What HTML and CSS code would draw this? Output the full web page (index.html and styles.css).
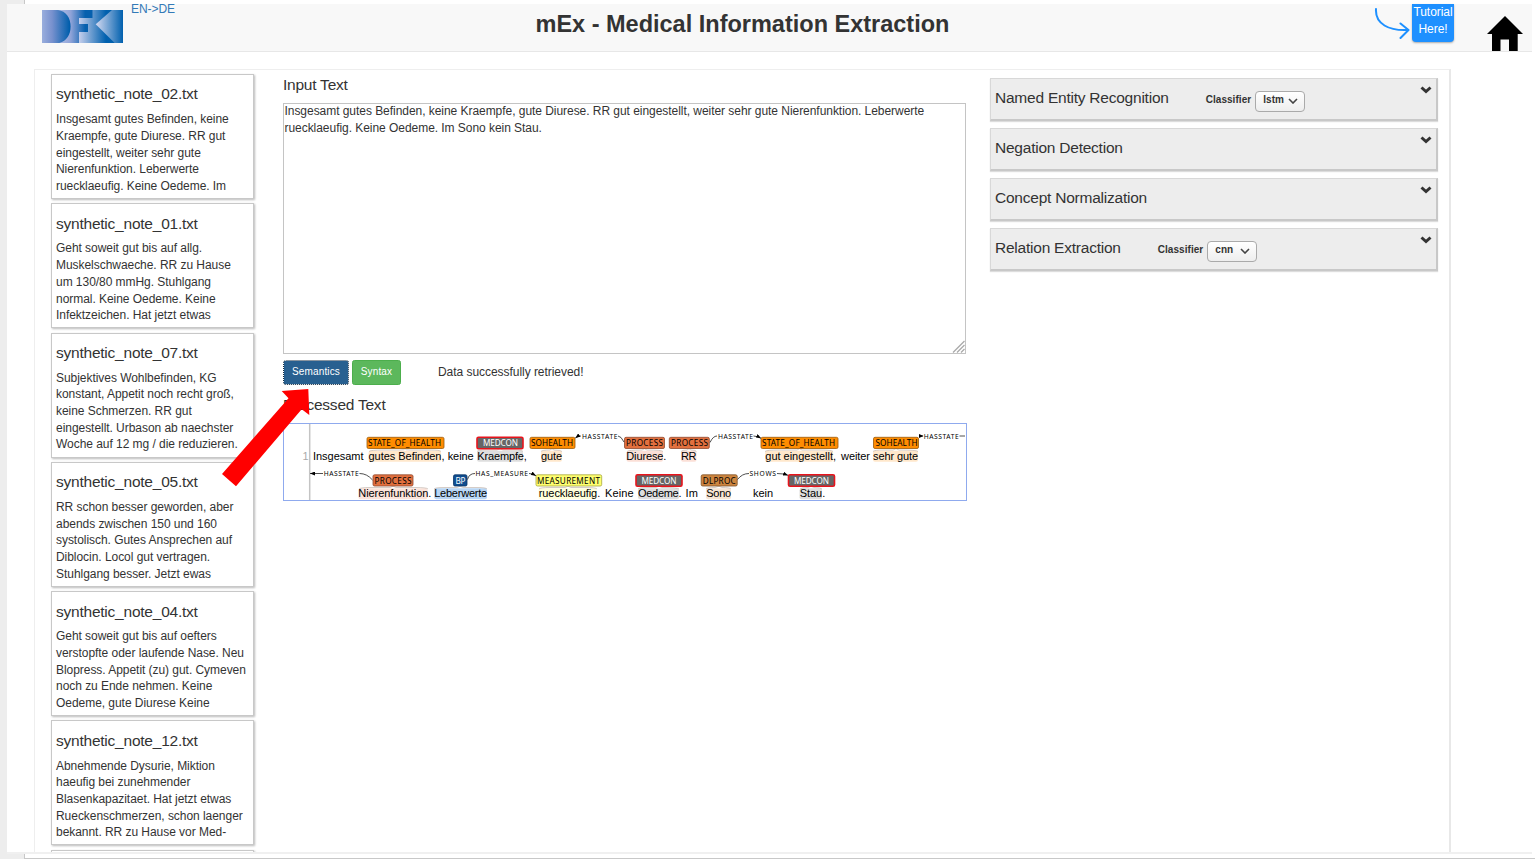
FILE: index.html
```html
<!DOCTYPE html>
<html lang="de">
<head>
<meta charset="utf-8">
<title>mEx - Medical Information Extraction</title>
<link rel="stylesheet" href="styles.css">
</head>
<body>
<div class="page">
  <header class="navbar">
    <svg class="logo" viewBox="0 0 81 33.3" preserveAspectRatio="none">
      <defs>
        <linearGradient id="d" gradientUnits="userSpaceOnUse" x1="0" x2="29"><stop offset="0" stop-color="#9aaedd"/><stop offset="0.35" stop-color="#7891ce"/><stop offset="0.95" stop-color="#005eac"/></linearGradient>
        <linearGradient id="f" gradientUnits="userSpaceOnUse" x1="16" x2="48"><stop offset="0" stop-color="#b4c0e5"/><stop offset="0.4" stop-color="#8fa3d8"/><stop offset="0.85" stop-color="#0560ae"/></linearGradient>
        <linearGradient id="k" gradientUnits="userSpaceOnUse" x1="37" x2="64"><stop offset="0" stop-color="#c5cfec"/><stop offset="1" stop-color="#0060ae"/></linearGradient>
        <linearGradient id="c" gradientUnits="userSpaceOnUse" x1="54" x2="81"><stop offset="0" stop-color="#d3d9f1"/><stop offset="1" stop-color="#0060ae"/></linearGradient>
      </defs>
      <rect width="81" height="33.3" fill="url(#k)"/>
      <path d="M0 0H50.500V8H46V14H46V22H37V33.300H0Z" fill="url(#f)"/>
      <path d="M37 8H50.500V14H37Z" fill="url(#k)"/>
      <path d="M0 0H16C24 1 28.600 8 28.600 16.500S24 32 16 33.300H0Z" fill="url(#d)"/>
      <path d="M53.700 14.300L70 0H81V33.300H73Z" fill="url(#c)"/>
    </svg>
    <a class="lang">EN-&gt;DE</a>
    <h1>mEx - Medical Information Extraction</h1>
    <svg class="swoosh" viewBox="0 0 36 34" fill="none" stroke="#1e90ff" stroke-width="2" stroke-linecap="round" stroke-linejoin="round"><path d="M2 1C1 16 15 23 34 22M26.500 15.500L34.500 22L26.500 30"/></svg>
    <a class="tutorial">Tutorial<br>Here!</a>
    <svg class="home" viewBox="0 0 36 35"><path d="M18 0L36 18H30.700V35H22V23.500H13.500V35H5V18H0Z"/></svg>
  </header>
  <main class="workspace">
    <aside class="notes">
      <article class="note"><h4>synthetic_note_02.txt</h4><p>Insgesamt gutes Befinden, keine
Kraempfe, gute Diurese. RR gut
eingestellt, weiter sehr gute
Nierenfunktion. Leberwerte
ruecklaeufig. Keine Oedeme. Im</p></article>
      <article class="note"><h4>synthetic_note_01.txt</h4><p>Geht soweit gut bis auf allg.
Muskelschwaeche. RR zu Hause
um 130/80 mmHg. Stuhlgang
normal. Keine Oedeme. Keine
Infektzeichen. Hat jetzt etwas</p></article>
      <article class="note"><h4>synthetic_note_07.txt</h4><p>Subjektives Wohlbefinden, KG
konstant, Appetit noch recht groß,
keine Schmerzen. RR gut
eingestellt. Urbason ab naechster
Woche auf 12 mg / die reduzieren.</p></article>
      <article class="note"><h4>synthetic_note_05.txt</h4><p>RR schon besser geworden, aber
abends zwischen 150 und 160
systolisch. Gutes Ansprechen auf
Diblocin. Locol gut vertragen.
Stuhlgang besser. Jetzt ewas</p></article>
      <article class="note"><h4>synthetic_note_04.txt</h4><p>Geht soweit gut bis auf oefters
verstopfte oder laufende Nase. Neu
Blopress. Appetit (zu) gut. Cymeven
noch zu Ende nehmen. Keine
Oedeme, gute Diurese Keine</p></article>
      <article class="note"><h4>synthetic_note_12.txt</h4><p>Abnehmende Dysurie, Miktion
haeufig bei zunehmender
Blasenkapazitaet. Hat jetzt etwas
Rueckenschmerzen, schon laenger
bekannt. RR zu Hause vor Med-</p></article>
      <article class="note"></article>
    </aside>
    <section class="editor">
      <h4>Input Text</h4>
      <div class="input"><p>Insgesamt gutes Befinden, keine Kraempfe, gute Diurese. RR gut eingestellt, weiter sehr gute Nierenfunktion. Leberwerte ruecklaeufig. Keine Oedeme. Im Sono kein Stau.</p>
        <svg class="grip" viewBox="0 0 13 13" stroke="#aaa" stroke-width="1.300"><path d="M1 12.500L12.500 1M5 12.500L12.500 5M9 12.500L12.500 9"/></svg>
      </div>
      <div class="actions"><button class="btn semantics">Semantics</button><button class="btn syntax">Syntax</button><span class="status">Data successfully retrieved!</span></div>
      <h4 class="processed">Processed Text</h4>
      <svg class="brat" viewBox="283 423 684 78">
        <defs><marker id="arrow" viewBox="0 0 5 4" refX="5" refY="2" markerWidth="5" markerHeight="4" markerUnits="userSpaceOnUse" orient="auto"><path d="M0 0L5 2L0 4Z" class="head"/></marker></defs>
        <rect x="283.5" y="423.5" width="683" height="77" fill="#fff" stroke="#8faaee"/>
        <path d="M309.700 424V500" stroke="#c4c4c4" stroke-width="1.500"/>
        <g class="marks">
          <rect x="368.500" y="450.700" width="72.500" height="11" fill="#ffe8cc"/><rect x="477" y="450.700" width="46" height="11" fill="#dedede"/><rect x="541" y="450.700" width="21" height="11" fill="#ffe8cc"/><rect x="626.500" y="450.700" width="36.500" height="11" fill="#fbe0d7"/><rect x="681" y="450.700" width="15.500" height="11" fill="#fbe0d7"/><rect x="765" y="450.700" width="68" height="11" fill="#ffe8cc"/><rect x="873" y="450.700" width="45" height="11" fill="#ffe8cc"/>
          <rect x="358.500" y="488.200" width="69" height="11" fill="#fbe3da"/><rect x="434.300" y="488.200" width="52.700" height="11" fill="#b8d6f5"/><rect x="538.500" y="488.200" width="58" height="11" fill="#ffffda"/><rect x="638" y="488.200" width="41" height="11" fill="#dedede"/><rect x="706" y="488.200" width="25" height="11" fill="#f7e5d4"/><rect x="799.500" y="488.200" width="22.500" height="11" fill="#dedede"/>
        </g>
        <g class="brackets">
          <path d="M369 451.500Q370 450 384 450H400Q405 450 405 448.700Q405 450 410 450H430Q440 450 441 451.500M477 451.500Q478 450 486 450H497L500 448.700L503 450H514Q522 450 523 451.500M541 451.500Q542 450 550 450L552 448.700L554 450Q561 450 562 451.500M627 451.500Q628 450 642 450L644.500 448.700L647 450Q662 450 663 451.500M681 451.500Q682 450 687 450L689 448.700L691 450Q696 450 696.500 451.500M765 451.500Q766 450 780 450H797L799.500 448.700L802 450H820Q832 450 833 451.500M873 451.500Q874 450 884 450H893L896 448.700L899 450Q917 450 918 451.500"/>
          <path d="M359 489Q360 487.500 370 487.500H390L393 486.200L396 487.500H415Q427 487.500 428 489M434 489Q435 487.500 444 487.500H457L460 486.200L463 487.500H477Q486 487.500 487 489M539 489Q540 487.500 550 487.500H565L568 486.200L571 487.500H585Q596 487.500 597 489M638 489Q639 487.500 648 487.500H656L659 486.200L662 487.500Q678 487.500 679 489M706 489Q707 487.500 715 487.500L719 486.200L722 487.500Q730 487.500 731 489M800 489Q801 487.500 808 487.500L811 486.200L814 487.500Q821 487.500 822 489"/>
        </g>
        <g class="words">
          <text x="302.500" y="459.700" fill="#aaa">1</text>
          <text x="313" y="459.700" textLength="50.500">Insgesamt</text><text x="368.500" y="459.700" textLength="76">gutes Befinden,</text><text x="447.700" y="459.700" textLength="26">keine</text><text x="477.300" y="459.700" textLength="49.500">Kraempfe,</text><text x="541" y="459.700" textLength="21">gute</text><text x="626.300" y="459.700" textLength="40">Diurese.</text><text x="681" y="459.700" textLength="15.500">RR</text><text x="765.300" y="459.700" textLength="70.700">gut eingestellt,</text><text x="841" y="459.700" textLength="29">weiter</text><text x="873" y="459.700" textLength="45">sehr gute</text>
          <text x="358.300" y="497" textLength="73">Nierenfunktion.</text><text x="434.200" y="497" textLength="53">Leberwerte</text><text x="538.700" y="497" textLength="61.500">ruecklaeufig.</text><text x="605" y="497" textLength="28.500">Keine</text><text x="638" y="497" textLength="43.500">Oedeme.</text><text x="685.500" y="497" textLength="12.500">Im</text><text x="706.200" y="497" textLength="25">Sono</text><text x="753" y="497" textLength="20">kein</text><text x="799.700" y="497" textLength="25.500">Stau.</text>
        </g>
        <g class="tags">
          <rect x="367" y="437.300" width="77" height="11.200" fill="#ff8c00" stroke="#9a5a0a"/><rect x="530" y="437.300" width="45" height="11.200" fill="#ff8c00" stroke="#9a5a0a"/><rect x="761" y="437.300" width="77" height="11.200" fill="#ff8c00" stroke="#9a5a0a"/><rect x="873.500" y="437.300" width="45" height="11.200" fill="#ff8c00" stroke="#9a5a0a"/>
          <rect x="624.500" y="437.300" width="40" height="11.200" fill="#e2703f" stroke="#8f4a30"/><rect x="669.300" y="437.300" width="40" height="11.200" fill="#e2703f" stroke="#8f4a30"/><rect x="373" y="474.800" width="40" height="11.200" fill="#e2703f" stroke="#8f4a30"/>
          <rect x="453.500" y="474.800" width="13.500" height="11.200" fill="#0f4d8f" stroke="#0a3564"/><rect x="536" y="474.800" width="65.700" height="11.200" fill="#ffff70" stroke="#a6a63f"/><rect x="701.200" y="474.800" width="36" height="11.200" fill="#cd853f" stroke="#7d5127"/>
          <g class="alert"><rect x="477" y="437.200" width="46" height="11.500"/><rect x="636" y="474.700" width="46" height="11.500"/><rect x="788.500" y="474.700" width="46" height="11.500"/></g>
        </g>
        <g class="labels">
          <text x="368" y="446.200" textLength="73">STATE_OF_HEALTH</text><text x="483" y="446.200" textLength="35" fill="#fff">MEDCON</text><text x="531" y="446.200" textLength="42">SOHEALTH</text><text x="626" y="446.200" textLength="37">PROCESS</text><text x="671" y="446.200" textLength="37">PROCESS</text><text x="762" y="446.200" textLength="73">STATE_OF_HEALTH</text><text x="875.500" y="446.200" textLength="42">SOHEALTH</text>
          <text x="374.500" y="483.700" textLength="37">PROCESS</text><text x="455.500" y="483.700" textLength="10" fill="#fff">BP</text><text x="537" y="483.700" textLength="63">MEASUREMENT</text><text x="641.500" y="483.700" textLength="35" fill="#fff">MEDCON</text><text x="702.700" y="483.700" textLength="33">DLPROC</text><text x="794" y="483.700" textLength="35" fill="#fff">MEDCON</text>
        </g>
        <g class="arcs">
          <path d="M581 436Q578 436 575.300 438" marker-end="url(#arrow)"/><path d="M618 436Q621 436 624 442"/>
          <path d="M710 442.500Q713 436 717 436"/><path d="M753.500 436Q757 436 761 438.300" marker-end="url(#arrow)"/>
          <path d="M923 436H919M959.500 436H965"/><path d="M919 434L923.500 436L919 438Z" class="head"/>
          <path d="M323 473.500H310" marker-end="url(#arrow)"/><path d="M359.500 473.500Q367 473.500 372.500 480"/>
          <path d="M467.500 479.500Q469 473.500 475 473.500"/><path d="M529 473.500Q532 473.500 536 475.700" marker-end="url(#arrow)"/>
          <path d="M737.500 479.500Q742 473.500 749 473.500"/><path d="M777 473.500Q783 473.500 788 475.300" marker-end="url(#arrow)"/>
        </g>
        <g class="relations">
          <text x="582" y="438.600" textLength="35.500">HASSTATE</text><text x="718" y="438.600" textLength="35">HASSTATE</text><text x="923.700" y="438.600" textLength="35">HASSTATE</text><text x="323.700" y="476.100" textLength="35">HASSTATE</text><text x="475.500" y="476.100" textLength="52.500">HAS_MEASURE</text><text x="749.500" y="476.100" textLength="26.500">SHOWS</text>
        </g>
      </svg>
    </section>
    <aside class="tasks">
      <div class="task"><h4>Named Entity Recognition</h4><b>Classifier</b><span class="select">lstm<svg viewBox="0 0 10 6"><path d="M1 1L5 5L9 1"/></svg></span><svg class="chevron" viewBox="0 0 12 8"><path d="M1.500 1.500L6 5.500L10.500 1.500"/></svg></div>
      <div class="task"><h4>Negation Detection</h4><svg class="chevron" viewBox="0 0 12 8"><path d="M1.500 1.500L6 5.500L10.500 1.500"/></svg></div>
      <div class="task"><h4>Concept Normalization</h4><svg class="chevron" viewBox="0 0 12 8"><path d="M1.500 1.500L6 5.500L10.500 1.500"/></svg></div>
      <div class="task"><h4>Relation Extraction</h4><b>Classifier</b><span class="select">cnn<svg viewBox="0 0 10 6"><path d="M1 1L5 5L9 1"/></svg></span><svg class="chevron" viewBox="0 0 12 8"><path d="M1.500 1.500L6 5.500L10.500 1.500"/></svg></div>
    </aside>
  </main>
</div>
<svg class="pointer" viewBox="220 388 92 100"><path d="M308.300 389L281.700 391L288.500 398.300L222 474L236 486.300L301.700 409.300L309.300 415Z" fill="#f00"/></svg>
</body>
</html>
```
FILE: styles.css
```css
* { box-sizing: border-box; }
html { height: 100%; }
body {
  margin: 0;
  height: 859px;
  padding: 4px 3px 6px 7px;
  overflow: hidden;
  position: relative;
  background:
    linear-gradient(#c8c8c8, #c8c8c8) 24px 0 / 1px 859px no-repeat,
    linear-gradient(#c8c8c8, #c8c8c8) 24px 858px / 1511px 1px no-repeat,
    linear-gradient(#fff, #fff) 25px 0 / 1510px 858px no-repeat,
    #ededed;
  color: #333;
  font: 12px/16.67px "Liberation Sans", Arial, sans-serif;
  letter-spacing: -0.045px;
}
h1, h4, p { margin: 0; }
h4 { font-size: 15.5px; font-weight: 400; line-height: 17px; letter-spacing: -0.23px; }
.page { height: 850px; background: #fff; border-bottom: 2px solid #f0f0f0; }
.navbar {
  height: 48px;
  display: flex;
  align-items: flex-start;
  background: #f8f8f8;
  border-bottom: 1px solid #e7e7e7;
  padding-left: 35px;
}
.logo { width: 81px; height: 33.3px; margin-top: 5.7px; }
.lang { color: #337ab7; margin: -3px 0 0 8px; width: 60px; }
h1 { width: 416px; margin: 7px 0 0 344.5px; font-size: 23.5px; line-height: 27px; white-space: nowrap; letter-spacing: 0; }
.swoosh { width: 36px; height: 34px; margin: 4px 0 0 422.5px; }
.tutorial {
  width: 42px; height: 38px; margin-left: 2px; background: #1e90ff; color: #fff;
  text-align: center; border-radius: 0 0 4px 4px; box-shadow: 0 1px 2px #aaa;
}
.home { width: 36px; height: 35px; margin: 12px 0 0 33px; }
.workspace {
  display: flex;
  width: 1417px; height: 783px;
  overflow: hidden;
  margin: 17px 0 0 27px;
  border: 1px solid #eee;
  border-right: 2px solid #e8e8e8;
  border-bottom: 0;
  padding-left: 16px;
}
.notes { width: 203px; padding-top: 4px; display: flex; flex-direction: column; gap: 4.3px; }
.note { height: 125px; flex: none; border: 1px solid #c8c8c8; box-shadow: 1px 1px 2px #bbb; padding: 10.4px 0 0 4px; overflow: hidden; white-space: pre; }
.note p { margin-top: 8.8px; }
.editor { width: 684px; margin-left: 29px; padding-top: 6px; }
.input { position: relative; width: 683px; height: 251px; margin-top: 10px; padding: 0 30px 0 0.5px; border: 1px solid #c4c4c4; }
.input p { margin-top: -1px; }
.grip { position: absolute; right: 0; bottom: 0; width: 13px; height: 13px; }
.actions { display: flex; margin-top: 6px; height: 25px; align-items: center; }
.btn { height: 25px; padding: 0 0 2px; border: 1px solid #4cae4c; border-radius: 2.500px; background: #5cb85c; color: #fff; font: 10px/15px "Liberation Sans", Arial, sans-serif; letter-spacing: 0.14px; }
.semantics { width: 66px; background: #286090; border: 1px solid #122b40; outline: 1px dotted #fff; outline-offset: -1px; }
.syntax { width: 49px; margin-left: 3px; }
.status { margin: -1px 0 0 37px; }
.processed { margin-top: 11px; }
.brat { display: block; width: 684px; height: 78px; margin-top: 10px; letter-spacing: 0; }
.marks rect { rx: 2px; }
.brackets path { fill: none; stroke: #b9a9a0; stroke-width: 0.6px; }
.words text { font: 11px "Liberation Sans", Arial, sans-serif; }
.tags rect { rx: 1.5px; stroke-width: 0.8px; }
.tags .alert rect { fill: #666; stroke: #e8141c; stroke-width: 1.6px; }
.labels text { font: 8.2px "Noto Sans", sans-serif; }
.relations text { font: 6.7px "Noto Sans", sans-serif; }
.arcs path { fill: none; stroke: #222; stroke-width: 0.8px; }
.arcs .head, .head { fill: #000; stroke: none; }
.tasks { width: 448px; margin-left: 23px; padding-top: 8px; display: flex; flex-direction: column; gap: 7px; }
.task {
  height: 43px; flex: none; display: flex; align-items: flex-start; padding: 11px 4px 0 5px;
  background: #ededed; border: 1px solid #d8d8d8; border-right: 2px solid #c8c8c8; border-bottom: 2px solid #c8c8c8;
  box-shadow: 0 1px 1px #ddd;
}
.task h4 { margin: -1px 0 0 -1px; }
.task b { font-size: 10px; letter-spacing: 0.05px; margin: 1px 4px 0 37px; line-height: 17px; }
.select {
  display: flex; align-items: center; justify-content: space-between;
  width: 50px; height: 21px; margin-top: 1px; padding: 0 6px 2px 7px; font-weight: bold; font-size: 10px; letter-spacing: 0.05px;
  border: 1px solid #aaa; border-radius: 4px; background: linear-gradient(#fff, #eee);
}
.select svg { width: 10px; height: 6px; fill: none; stroke: #444; stroke-width: 1.6px; margin-top: 1px; }
.chevron { width: 12px; height: 8px; margin: -4px 0 0 auto; fill: none; stroke: #333; stroke-width: 3px; }
.pointer { position: absolute; left: 220px; top: 388px; width: 92px; height: 100px; }
```
